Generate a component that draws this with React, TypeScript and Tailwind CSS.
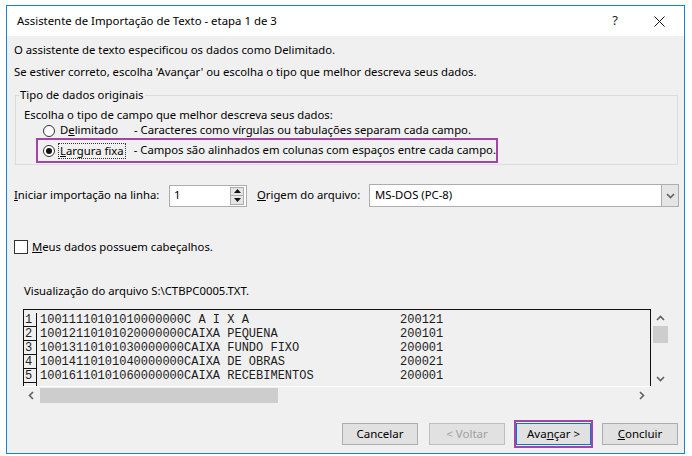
import React from 'react';

const ui = { fontFamily: '"Noto Sans", "Open Sans", sans-serif' };
const mono = { fontFamily: '"Liberation Mono", "Courier New", monospace' };

// preview lines of the fixed width file
const rows = [
	['10011110101010000000', 'C A I X A', '200121'],
	['10012110101020000000', 'CAIXA PEQUENA', '200101'],
	['10013110101030000000', 'CAIXA FUNDO FIXO', '200001'],
	['10014110101040000000', 'CAIXA DE OBRAS', '200021'],
	['10016110101060000000', 'CAIXA RECEBIMENTOS', '200001'],
];

function Chevron({ dir }: { dir: 'up' | 'down' | 'left' | 'right' }) {
	const pts = {
		up: '1,6 4.5,2.5 8,6',
		down: '1,3 4.5,6.5 8,3',
		left: '6,1 2.5,4.5 6,8',
		right: '3,1 6.5,4.5 3,8',
	}[dir];
	return (
		<svg width="9" height="9" viewBox="0 0 9 9">
			<polyline points={pts} fill="none" stroke="#606060" strokeWidth="1.6" />
		</svg>
	);
}

function Radio({ checked }: { checked?: boolean }) {
	return (
		<span className="w-[12px] h-[12px] rounded-full border border-[#333] bg-white flex items-center justify-center shrink-0">
			{checked && <span className="w-[6px] h-[6px] rounded-full bg-[#111]" />}
		</span>
	);
}

function Btn({ children, disabled, focused }: { children: React.ReactNode; disabled?: boolean; focused?: boolean }) {
	return (
		<div
			className={
				focused
					? 'w-[75px] h-[22px] bg-[#e1e1e1] border border-[#0078d7] flex items-center justify-center text-[11.5px] text-black'
					: disabled
					? 'w-[76px] h-[22px] bg-[#e1e1e1] border border-[#bfbfbf] flex items-center justify-center text-[11.5px] text-[#a0a0a0]'
					: 'w-[76px] h-[22px] bg-[#e1e1e1] border border-[#adadad] flex items-center justify-center text-[11.5px] text-black'
			}
		>
			{children}
		</div>
	);
}

export default function App() {
	return (
		<div className="w-[692px] h-[456px] bg-white pt-[5px] pl-[6px]" style={ui}>
			<div className="w-[679px] h-[449px] border border-[#1883d7] flex flex-col">
				{/* title bar */}
				<div className="h-[30px] bg-white flex items-center pl-[10px] shrink-0">
					<span className="text-[11.4px] text-black">Assistente de Importação de Texto - etapa 1 de 3</span>
					<span className="ml-auto text-[13px] text-[#222] mr-[36px]">?</span>
					<svg width="11" height="11" viewBox="0 0 11 11" className="mr-[19px]">
						<path d="M0.5 0.5 L10.5 10.5 M10.5 0.5 L0.5 10.5" stroke="#111" strokeWidth="1" />
					</svg>
				</div>

				{/* body */}
				<div className="flex-1 bg-[#f0f0f0] flex flex-col text-[11.3px] text-black whitespace-nowrap">
					<p className="mt-[6px] pl-[7px] leading-[16px]">O assistente de texto especificou os dados como Delimitado.</p>
					<p className="mt-[6px] pl-[7px] leading-[16px]">
						Se estiver correto, escolha 'Avançar' ou escolha o tipo que melhor descreva seus dados.
					</p>

					<fieldset className="mt-[7px] ml-[8px] w-[663px] border border-[#dcdcdc] pb-[1px]">
						<legend className="ml-[3px] px-[1px] leading-[16px]">Tipo de dados originais</legend>
						<p className="mt-[4px] pl-[8px] leading-[16px]">Escolha o tipo de campo que melhor descreva seus dados:</p>
						<div className="h-[15px] flex items-center pl-[27px]">
							<Radio />
							<span className="ml-[5px] w-[74px]">
								D<span className="underline">e</span>limitado
							</span>
							<span>- Caracteres como vírgulas ou tabulações separam cada campo.</span>
						</div>
						<div className="ml-[20px] w-[462px] h-[25px] border-2 border-[#a344a8] flex items-center pl-[5px]">
							<Radio checked />
							<span className="ml-[3px] w-[81px] flex">
								<span className="border border-dotted border-[#333] px-[1px] leading-[14px]">
									<span className="underline">L</span>argura fixa
								</span>
							</span>
							<span>- Campos são alinhados em colunas com espaços entre cada campo.</span>
						</div>
					</fieldset>

					{/* start row and file origin */}
					<div className="mt-[19px] h-[23px] flex items-center pl-[7px]">
						<span className="w-[155px]">
							<span className="underline">I</span>niciar importação na linha:
						</span>
						<div className="w-[78px] h-[22px] bg-white border border-[#adadad] flex items-center">
							<span className="pl-[4px] flex-1">1</span>
							<div className="w-[14px] h-[18px] mr-[2px] flex flex-col border border-[#adadad]">
								<div className="flex-1 bg-[#e5e5e5] border-b border-[#adadad] flex items-center justify-center">
									<svg width="7" height="4" viewBox="0 0 7 4">
										<polygon points="0,4 3.5,0 7,4" fill="#111" />
									</svg>
								</div>
								<div className="flex-1 bg-[#e5e5e5] flex items-center justify-center">
									<svg width="7" height="4" viewBox="0 0 7 4">
										<polygon points="0,0 3.5,4 7,0" fill="#111" />
									</svg>
								</div>
							</div>
						</div>
						<span className="ml-[10px] w-[112px]">
							<span className="underline">O</span>rigem do arquivo:
						</span>
						<div className="w-[310px] h-[23px] bg-white border border-[#adadad] flex items-center">
							<span className="pl-[5px] flex-1">MS-DOS (PC-8)</span>
							<div className="w-[17px] h-full bg-[#e5e5e5] border-l border-[#adadad] flex items-center justify-center">
								<Chevron dir="down" />
							</div>
						</div>
					</div>

					<div className="mt-[33px] h-[14px] flex items-center pl-[7px]">
						<span className="w-[14px] h-[14px] border border-[#333] bg-white shrink-0" />
						<span className="ml-[4px] pt-[1px]">
							<span className="underline">M</span>eus dados possuem cabeçalhos.
						</span>
					</div>

					<p className="mt-[29px] pl-[17px] leading-[16px]">Visualização do arquivo S:\CTBPC0005.TXT.</p>

					{/* file preview */}
					<div className="mt-[10px] ml-[16px] w-[645px] flex flex-col">
						<div className="flex h-[77px]">
							<div className="w-[628px] h-full border-t border-l border-r border-[#111] overflow-hidden pt-[3px] text-[12px] text-[#1c1c1c]" style={mono}>
								{rows.map((r, i) => (
									<div key={i} className="flex h-[14px] leading-[14px]">
										<span className="w-[13px] h-[14px] border-b border-r border-[#111] pl-[1px]">{i + 1}</span>
										<span className="ml-[3px] whitespace-pre">{r[0] + r[1].padEnd(30, ' ') + r[2]}</span>
									</div>
								))}
								<div className="w-[13px] h-[14px] border-r border-[#111]" />
							</div>
							<div className="w-[17px] h-full flex flex-col items-center pl-[1px]">
								<div className="mt-[5px]">
									<Chevron dir="up" />
								</div>
								<div className="mt-[3px] w-[15px] h-[17px] bg-[#cdcdcd]" />
								<div className="mt-auto mb-[3px]">
									<Chevron dir="down" />
								</div>
							</div>
						</div>
						<div className="w-[628px] h-[17px] border-t border-white flex items-center">
							<div className="ml-[4px]">
								<Chevron dir="left" />
							</div>
							<div className="ml-[4px] w-[238px] h-[15px] bg-[#cdcdcd]" />
							<div className="ml-auto mr-[5px]">
								<Chevron dir="right" />
							</div>
						</div>
					</div>

					{/* buttons */}
					<div className="mt-[17px] flex items-center justify-end pr-[6px]">
						<Btn>Cancelar</Btn>
						<div className="ml-[11px]">
							<Btn disabled>&lt; Voltar</Btn>
						</div>
						<div className="ml-[9px] border-2 border-[#a344a8] py-[1px]">
							<Btn focused>
								Ava<span className="underline">n</span>çar &gt;
							</Btn>
						</div>
						<div className="ml-[9px]">
							<Btn>
								<span className="underline">C</span>oncluir
							</Btn>
						</div>
					</div>
				</div>
			</div>
		</div>
	);
}
